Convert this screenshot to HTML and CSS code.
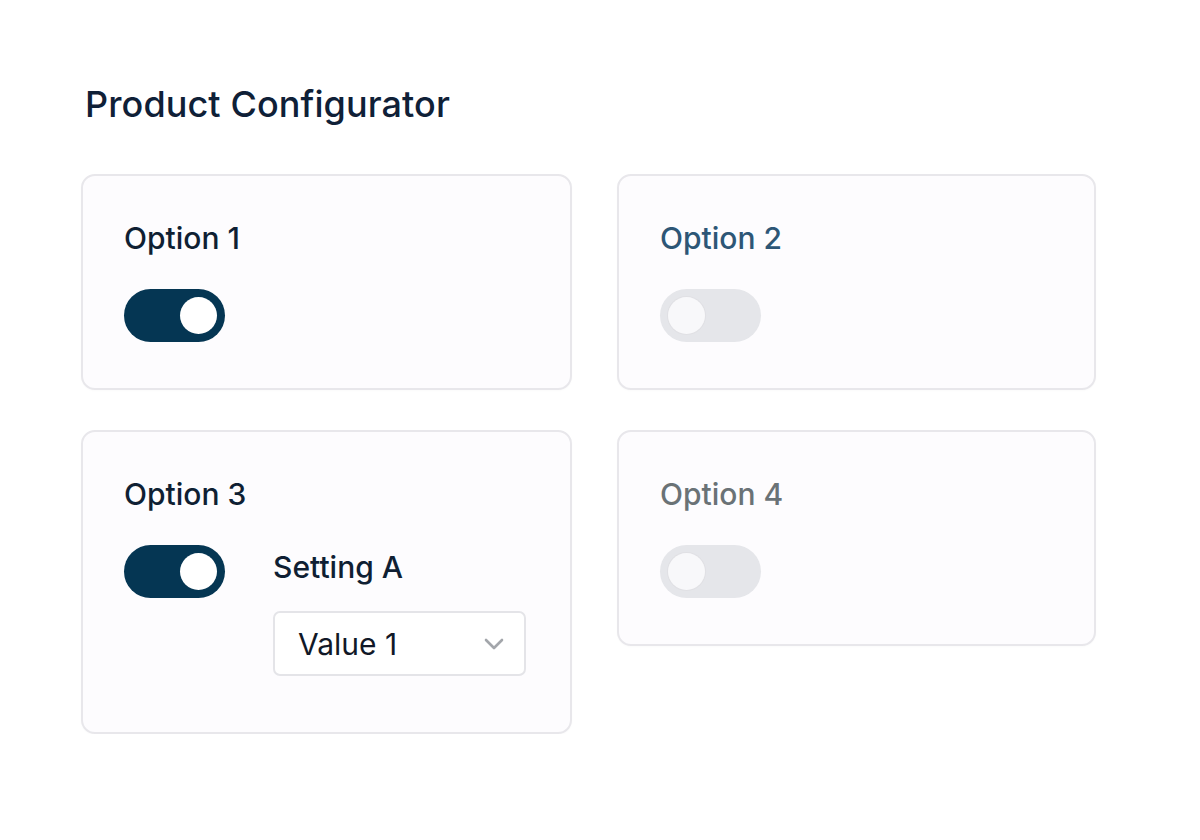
FILE: index.html
```html
<!DOCTYPE html>
<html lang="en">
<head>
<meta charset="utf-8">
<title>Product Configurator</title>
<link rel="stylesheet" href="styles.css">
</head>
<body>
<main class="page">
  <h1 class="title">Product Configurator</h1>
  <div class="grid">
    <section class="card">
      <h2 class="label label-dark">Option 1</h2>
      <div class="toggle on"><span class="knob"></span></div>
    </section>
    <section class="card">
      <h2 class="label label-blue">Option 2</h2>
      <div class="toggle off"><span class="knob"></span></div>
    </section>
    <section class="card">
      <h2 class="label label-dark">Option 3</h2>
      <div class="row">
        <div class="toggle on"><span class="knob"></span></div>
        <div class="setting">
          <div class="setting-label">Setting A</div>
          <div class="select">
            <span class="select-value">Value 1</span>
            <svg class="chevron" width="20" height="12" viewBox="0 0 20 12" fill="none"><path d="M2 2 L10 10 L18 2" stroke="#a3a6ab" stroke-width="2.6" stroke-linecap="round" stroke-linejoin="round"/></svg>
          </div>
        </div>
      </div>
    </section>
    <section class="card">
      <h2 class="label label-gray">Option 4</h2>
      <div class="toggle off"><span class="knob"></span></div>
    </section>
  </div>
</main>
</body>
</html>
```
FILE: styles.css
```css
* { box-sizing: border-box; }
html, body { margin: 0; padding: 0; background: #ffffff; }
body {
  font-family: Inter, "Noto Sans", "Liberation Sans", sans-serif;
  color: #0f1f33;
}
.page {
  padding: 80px 0 0 81px;
}
.title {
  margin: 0 0 46px 4px;
  font-size: 36px;
  font-weight: 500;
  line-height: 48px;
  color: #0f2037;
  letter-spacing: 0.1px;
}
.grid {
  display: grid;
  grid-template-columns: 491px 479px;
  column-gap: 45px;
  row-gap: 40px;
  align-items: start;
}
.card {
  background: #fdfcfe;
  border: 2px solid #e8e7eb;
  border-radius: 14px;
  padding: 42px 40px 46px 41px;
  box-shadow: 0 1px 2px rgba(0,0,0,0.02);
}
.label {
  margin: 0 0 31px 0;
  font-size: 30px;
  font-weight: 500;
  line-height: 40px;
}
.label-dark { color: #0f1f33; }
.label-blue { color: #2d5676; }
.label-gray { color: #6a7276; }
.toggle {
  width: 101px;
  height: 53px;
  border-radius: 27px;
  padding: 8px;
  display: flex;
  flex: none;
}
.toggle.on {
  background: #053653;
  justify-content: flex-end;
}
.toggle.off {
  background: #e5e6ea;
  justify-content: flex-start;
}
.knob {
  width: 37px;
  height: 37px;
  border-radius: 50%;
  background: #ffffff;
}
.toggle.off .knob {
  background: #f8f8fa;
  box-shadow: 0 0 0 1px #e0e0e4;
}
.row {
  display: flex;
  align-items: flex-start;
  gap: 48px;
}
.setting {
  display: flex;
  flex-direction: column;
  gap: 24px;
  padding-top: 2px;
  padding-bottom: 10px;
}
.setting-label {
  font-size: 30px;
  font-weight: 500;
  line-height: 40px;
  color: #0f1f33;
}
.select {
  width: 253px;
  height: 65px;
  border: 2px solid #e4e4e8;
  border-radius: 7px;
  background: #ffffff;
  display: flex;
  align-items: center;
  justify-content: space-between;
  padding: 0 20px 0 23px;
}
.select-value {
  font-size: 30px;
  font-weight: 400;
  color: #111827;
}
.chevron { display: block; }
```
